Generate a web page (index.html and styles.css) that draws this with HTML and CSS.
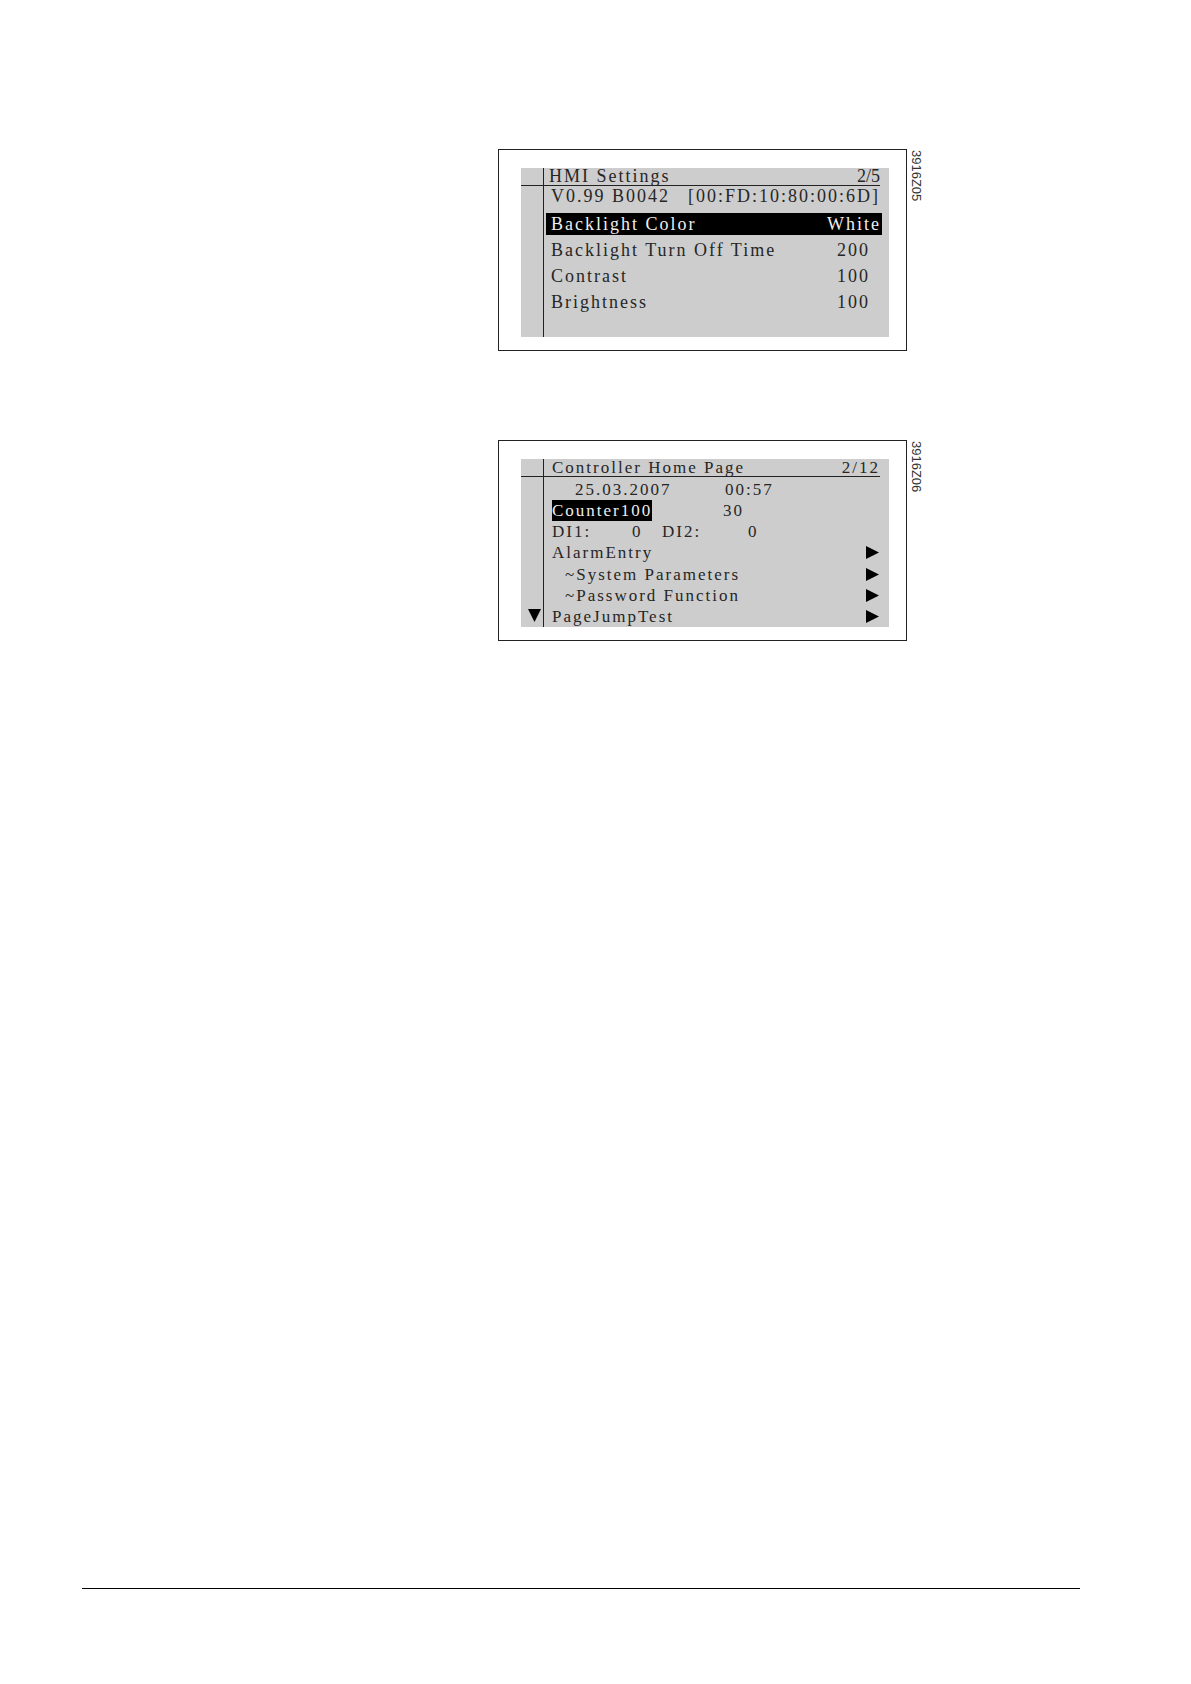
FILE: index.html
```html
<!DOCTYPE html>
<html lang="en">
<head>
<meta charset="utf-8">
<meta name="viewport" content="width=device-width, initial-scale=1">
<title>HMI Settings and Controller Home Page</title>
<link rel="stylesheet" href="styles.css">
</head>
<body>
<svg class="symbols" aria-hidden="true">
  <symbol id="arrow-right" viewBox="0 0 13 13"><path d="M0 0L13 6.5L0 13Z"/></symbol>
  <symbol id="arrow-down" viewBox="0 0 13 13"><path d="M0 0H13L6.5 13Z"/></symbol>
</svg>
<main class="page">
  <figure class="figure">
    <div class="frame">
      <section class="screen screen-settings">
        <header class="title">
          <h2>HMI Settings</h2>
          <span class="count">2/5</span>
        </header>
        <div class="gutter"></div>
        <div class="content">
          <div class="version"><span>V0.99 B0042</span><span>[00:FD:10:80:00:6D]</span></div>
          <dl class="settings">
            <div class="setting selected"><dt>Backlight Color</dt><dd>White</dd></div>
            <div class="setting"><dt>Backlight Turn Off Time</dt><dd>200</dd></div>
            <div class="setting"><dt>Contrast</dt><dd>100</dd></div>
            <div class="setting"><dt>Brightness</dt><dd>100</dd></div>
          </dl>
        </div>
      </section>
    </div>
    <figcaption class="code">3916Z05</figcaption>
  </figure>

  <figure class="figure">
    <div class="frame">
      <section class="screen screen-home">
        <header class="title">
          <h2>Controller Home Page</h2>
          <span class="count">2/12</span>
        </header>
        <div class="gutter"><svg class="arrow"><use href="#arrow-down"/></svg></div>
        <div class="content">
          <div class="readout"><span class="wide indent-date">25.03.2007</span><span class="value indent-time">00:57</span></div>
          <div class="readout"><span class="wide"><mark>Counter100</mark></span><span class="value">30</span></div>
          <div class="readout"><span>DI1:</span><span>0</span><span>DI2:</span><span class="last">0</span></div>
          <div class="entry"><span>AlarmEntry</span><svg class="arrow"><use href="#arrow-right"/></svg></div>
          <div class="entry"><span class="indent">~System Parameters</span><svg class="arrow"><use href="#arrow-right"/></svg></div>
          <div class="entry"><span class="indent">~Password Function</span><svg class="arrow"><use href="#arrow-right"/></svg></div>
          <div class="entry"><span>PageJumpTest</span><svg class="arrow"><use href="#arrow-right"/></svg></div>
        </div>
      </section>
    </div>
    <figcaption class="code">3916Z06</figcaption>
  </figure>

  <hr class="rule">
</main>
</body>
</html>
```
FILE: styles.css
```css
* {
  box-sizing: border-box;
}

body {
  margin: 0;
  background: #fff;
  color: #262626;
  font-family: "Liberation Serif", "Times New Roman", serif;
}

.symbols {
  position: absolute;
  width: 0;
  height: 0;
}

.page {
  display: flex;
  flex-direction: column;
  gap: 89px;
  min-height: 100vh;
  padding: 149px 111px 95px 82px;
}

.figure {
  display: flex;
  align-items: flex-start;
  gap: 2px;
  margin: 0 0 0 416px;
}

.frame {
  flex: 0 1 409px;
  padding: 18px 17px 13px 22px;
  border: 1px solid #222;
}

.code {
  padding-top: 1px;
  color: #333;
  font: 13px/15px "Liberation Sans", Arial, sans-serif;
  writing-mode: vertical-rl;
}

.screen {
  display: grid;
  grid-template-columns: 22px 1fr 9px;
  grid-template-rows: 18px 1fr;
  min-height: 169px;
  background: #cdcdcd;
  font-size: 18px;
  line-height: 22px;
  letter-spacing: 2px;
  white-space: nowrap;
}

.title {
  grid-column: 1 / 3;
  display: grid;
  grid-template-columns: 22px 1fr auto;
  border-bottom: 1px solid #222;
  line-height: 17px;
}

.title h2 {
  grid-column: 2;
  margin: 0;
  padding-left: 5px;
  border-left: 1px solid #222;
  font: inherit;
}

.count {
  letter-spacing: 0;
}

.gutter {
  grid-column: 1;
  display: flex;
  align-items: flex-end;
  justify-content: flex-end;
  padding: 0 2px 5px 0;
}

.content {
  grid-column: 2;
  border-left: 1px solid #222;
}

.version {
  display: flex;
  justify-content: space-between;
  padding-left: 7px;
  line-height: 20px;
}

.settings {
  display: grid;
  gap: 4px;
  margin: 7px -2px 0 2px;
}

.setting {
  display: flex;
  justify-content: space-between;
  padding: 0 12px 0 5px;
}

.setting dd {
  margin: 0;
}

.selected {
  padding-right: 1px;
  background: #000;
  color: #eee;
}

.screen-home {
  min-height: 168px;
  font-size: 17px;
  line-height: 21px;
}

.screen-home .title h2 {
  padding-left: 8px;
}

.screen-home .count {
  letter-spacing: 2px;
}

.screen-home .content {
  display: grid;
  grid-auto-rows: 1fr;
  padding: 2px 0 0 8px;
}

.readout {
  display: grid;
  grid-template-columns: 80px 30px 61px 25px 1fr;
}

.wide {
  grid-column: 1 / 4;
}

.value {
  grid-column: 4 / 6;
}

.last {
  grid-column: 5;
}

.indent-date {
  padding-left: 23px;
}

.indent-time {
  padding-left: 2px;
}

.readout mark {
  display: inline-block;
  background: #000;
  color: #eee;
}

.entry {
  display: flex;
  align-items: center;
  justify-content: space-between;
}

.indent {
  padding-left: 13px;
}

.arrow {
  width: 13px;
  height: 13px;
  fill: #000;
}

.entry .arrow {
  margin-right: 1px;
}

.rule {
  width: 100%;
  margin: auto 0 0;
  border: 0;
  border-top: 1px solid #000;
}
```
